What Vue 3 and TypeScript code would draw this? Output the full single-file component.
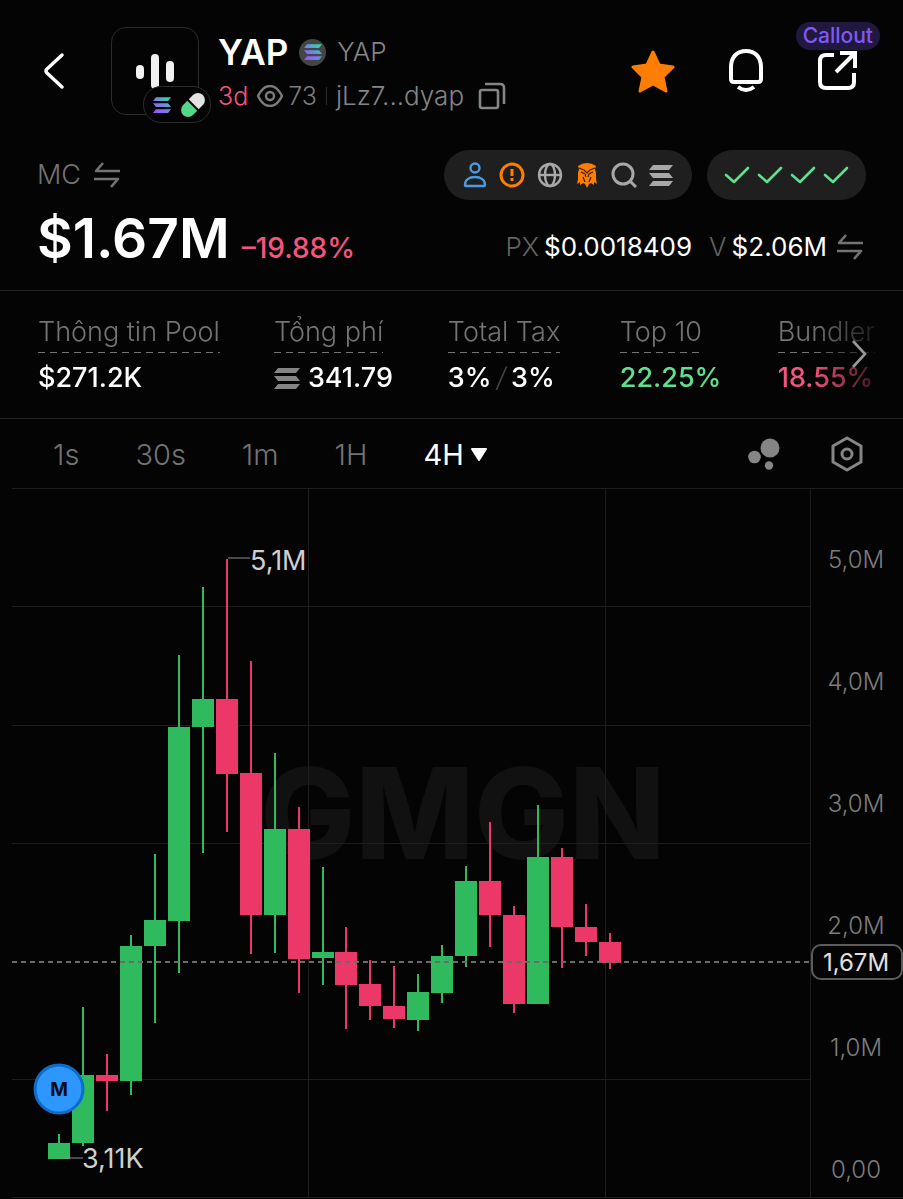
<script setup lang="ts">
interface Candle {
  up: boolean
  high: number
  top: number
  bottom: number
  low: number
}

const STEP = 24
const FIRST = 59
const LAST = 610

const raw: [boolean, number, number, number, number][] = [
  [true, 1134, 1143, 1159, 1159],
  [true, 1007, 1075, 1143, 1146],
  [false, 1054, 1075, 1081, 1111],
  [true, 935, 946, 1081, 1095],
  [true, 854, 920, 946, 1023],
  [true, 655, 727, 921, 973],
  [true, 587, 699, 727, 853],
  [false, 559, 699, 774, 832],
  [false, 661, 773, 915, 954],
  [true, 753, 829, 915, 953],
  [false, 807, 829, 959, 993],
  [true, 867, 952, 958, 985],
  [false, 927, 952, 985, 1029],
  [false, 960, 984, 1006, 1020],
  [false, 966, 1006, 1019, 1028],
  [true, 974, 992, 1020, 1031],
  [true, 945, 956, 993, 1003],
  [true, 866, 881, 956, 967],
  [false, 822, 881, 915, 947],
  [false, 906, 915, 1004, 1013],
  [true, 805, 857, 1004, 1004],
  [false, 848, 857, 927, 968],
  [false, 904, 927, 942, 956],
  [false, 933, 942, 963, 969],
]

const candles: Candle[] = raw.map(([up, high, top, bottom, low]) => ({ up, high, top, bottom, low }))
const centerOf = (i: number): number =>
  i === 0 ? FIRST : Math.round(FIRST + ((LAST - FIRST) * i) / (raw.length - 1))
const bodyWidth = STEP - 2

const gridY = [606, 725, 843, 1079, 1197]
const gridX = [308, 605]
const axis = [
  { label: '5,0M', y: 568 },
  { label: '4,0M', y: 690 },
  { label: '3,0M', y: 812 },
  { label: '2,0M', y: 934 },
  { label: '1,0M', y: 1056 },
  { label: '0,00', y: 1178 },
]

const frames = ['1s', '30s', '1m', '1H']
const checkCount = 4
</script>

<template>
  <main class="page">
    <svg class="defs" aria-hidden="true">
      <defs>
        <linearGradient id="sol" x1="0" y1="1" x2="1" y2="0">
          <stop offset="0" stop-color="#a04dff" />
          <stop offset="0.5" stop-color="#6f86e6" />
          <stop offset="1" stop-color="#19f0a0" />
        </linearGradient>
        <symbol id="bars" viewBox="0 0 24 21">
          <path d="M4 0h20l-4 5H0zM0 8h20l4 5H4zM4 16h20l-4 5H0z" />
        </symbol>
        <symbol id="swap" viewBox="0 0 28 28">
          <path d="M27 10H3l7-8M1 18h24l-7 8" fill="none" stroke="currentColor" stroke-width="2.6" stroke-linejoin="round" />
        </symbol>
      </defs>
    </svg>

    <header class="top">
      <button class="icon back" aria-label="Back">
        <svg width="22" height="38" viewBox="0 0 22 38"><path d="M19 3 4 17q-2 2 0 4l15 14" fill="none" stroke="#fff" stroke-width="3.4" stroke-linecap="round" /></svg>
      </button>
      <div class="avatar">
        <svg width="40" height="36" viewBox="0 0 40 36" fill="#f2f2f2">
          <rect x="1" y="12" width="8" height="14" rx="4" />
          <rect x="16" y="1" width="8" height="35" rx="4" />
          <rect x="31" y="8" width="8" height="21" rx="4" />
        </svg>
        <div class="chain">
          <svg width="18" height="16" viewBox="0 0 24 21"><path d="M4 0h20l-4 5H0zM0 8h20l4 5H4zM4 16h20l-4 5H0z" fill="url(#sol)" /></svg>
          <svg width="28" height="28" viewBox="0 0 28 28">
            <g transform="rotate(45 14 14)">
              <path d="M7 13V7a7 7 0 0 1 14 0v6z" fill="#e2e2e2" />
              <path d="M7 15v6a7 7 0 0 0 14 0v-6z" fill="#55d68a" />
            </g>
          </svg>
        </div>
      </div>
      <div class="ident">
        <div class="name">
          <h1>YAP</h1>
          <span class="coin"><svg width="18" height="16" viewBox="0 0 24 21"><path d="M4 0h20l-4 5H0zM0 8h20l4 5H4zM4 16h20l-4 5H0z" fill="url(#sol)" /></svg></span>
          <span class="full">YAP</span>
        </div>
        <div class="meta">
          <span class="age">3d</span>
          <svg class="eye" width="26" height="22" viewBox="0 0 26 22" fill="none" stroke="#7c7c7c" stroke-width="2.4">
            <path d="M1 11C4 5 8 1 13 1s9 4 12 10c-3 6-7 10-12 10S4 17 1 11z" /><circle cx="13" cy="11" r="4" />
          </svg>
          <span class="views">73</span>
          <i class="sep"></i>
          <span class="addr">jLz7...dyap</span>
          <button class="icon" aria-label="Copy address">
            <svg width="28" height="28" viewBox="0 0 28 28" fill="none" stroke="#858585" stroke-width="2.6">
              <rect x="2" y="8" width="18" height="18" rx="2" /><path d="M7 2h15q4 0 4 4v16" />
            </svg>
          </button>
        </div>
      </div>
      <nav class="actions">
        <button class="icon" aria-label="Favourite">
          <svg width="44" height="44" viewBox="0 0 44 44"><path d="m22 3 6 13 14 2-10 10 3 14-13-7-13 7 3-14L2 18l14-2z" fill="#ff7d00" stroke="#ff7d00" stroke-width="3" stroke-linejoin="round" /></svg>
        </button>
        <button class="icon" aria-label="Alerts">
          <svg width="36" height="44" viewBox="0 0 36 44" fill="none" stroke="#fff" stroke-width="4">
            <path d="M3 18C3 8 9 2 18 2s15 6 15 16v12q0 3-3 3H6q-3 0-3-3z" /><path d="M10 38q8 6 16 0" />
          </svg>
        </button>
        <button class="icon share" aria-label="Share callout">
          <svg width="40" height="40" viewBox="0 0 40 40" fill="none" stroke="#fff" stroke-width="4">
            <path d="M17 4H9Q3 4 3 10v21q0 6 6 6h22q6 0 6-6V22" /><path d="M23 2h15v15M37 3 19 21" />
          </svg>
          <span class="callout">Callout</span>
        </button>
      </nav>
    </header>

    <section class="summary">
      <div class="row">
        <button class="icon mc">MC <svg width="28" height="28"><use href="#swap" /></svg></button>
        <div class="pills">
          <div class="pill links">
            <svg width="24" height="26" viewBox="0 0 24 26" fill="none" stroke="#4a9be0" stroke-width="2.4"><circle cx="12" cy="6" r="4.5" /><path d="M2 23c0-5 4-8 10-8s10 3 10 8q0 1-1 1H3q-1 0-1-1z" /></svg>
            <svg width="26" height="26" viewBox="0 0 26 26" fill="none" stroke="#ff7d00" stroke-width="3"><circle cx="13" cy="13" r="11" /><path d="M13 7v7M13 16v3" /></svg>
            <svg width="26" height="26" viewBox="0 0 26 26" fill="none" stroke="#a8a8a8" stroke-width="2.4"><circle cx="13" cy="13" r="11" /><ellipse cx="13" cy="13" rx="5" ry="11" /><path d="M2 13h22" /></svg>
            <svg width="24" height="26" viewBox="0 0 24 26">
              <path d="M3 4Q7 1 12 1t9 3l-1 3 1 4v6l1 5-3-2v3l-3-2-2 1-2 4-2-4-2-1-3 2v-3l-3 2 1-5v-6l1-4z" fill="#ff7d00" />
              <path d="m4 6 5 2 3 3 3-3 5-2M6 10l4 2 1 3M18 10l-4 2-1 3M8 15l2 5M16 15l-2 5" fill="none" stroke="#3a220d" stroke-width="1.2" />
            </svg>
            <svg width="26" height="26" viewBox="0 0 26 26" fill="none" stroke="#a8a8a8" stroke-width="3"><circle cx="12" cy="12" r="10" /><path d="m19 19 6 6" /></svg>
            <svg width="24" height="21" fill="#a8a8a8"><use href="#bars" /></svg>
          </div>
          <div class="pill">
            <svg v-for="n in checkCount" :key="n" width="26" height="20" viewBox="0 0 26 20"><path d="m2 10 8 7L24 3" fill="none" stroke="#5fe08f" stroke-width="2.6" stroke-linecap="round" stroke-linejoin="round" /></svg>
          </div>
        </div>
      </div>
      <div class="row prices">
        <div class="cap"><strong>$1.67M</strong><span class="change">–19.88%</span></div>
        <div class="quote">
          <span class="key">PX</span><span>$0.0018409</span>
          <span class="key vol">V</span><span>$2.06M</span>
          <button class="icon" aria-label="Switch volume"><svg width="28" height="28"><use href="#swap" /></svg></button>
        </div>
      </div>
    </section>

    <section class="stats">
      <dl>
        <div><dt>Thông tin Pool</dt><dd>$271.2K</dd></div>
        <div><dt>Tổng phí</dt><dd class="fee"><svg width="26" height="21" viewBox="0 0 26 21" fill="#858585"><path d="M4 0h22l-4 5H0zM0 8h22l4 5H4zM4 16h22l-4 5H0z" /></svg>341.79</dd></div>
        <div><dt>Total Tax</dt><dd>3%<i>/</i>3%</dd></div>
        <div><dt>Top 10</dt><dd class="good">22.25%</dd></div>
        <div><dt>Bundler</dt><dd class="bad">18.55%</dd></div>
      </dl>
      <button class="icon more" aria-label="More statistics">
        <svg width="16" height="30" viewBox="0 0 16 30"><path d="m2 2 12 13L2 28" fill="none" stroke="#999" stroke-width="2.6" /></svg>
      </button>
    </section>

    <nav class="frames">
      <button v-for="f in frames" :key="f" class="icon frame">{{ f }}</button>
      <button class="icon frame on">4H<svg width="18" height="14" viewBox="0 0 18 14"><path d="M2 1h14l-7 11z" fill="#fff" stroke="#fff" stroke-width="2" stroke-linejoin="round" /></svg></button>
      <div class="tools">
        <button class="icon" aria-label="Bubble map">
          <svg width="32" height="32" viewBox="0 0 32 32" fill="#858585"><circle cx="22" cy="10" r="9.5" /><circle cx="6.5" cy="19" r="6.3" /><circle cx="21" cy="27.5" r="4.2" /></svg>
        </button>
        <button class="icon" aria-label="Chart settings">
          <svg width="32" height="36" viewBox="0 0 32 36" fill="none" stroke="#858585" stroke-width="3" stroke-linejoin="round"><path d="m16 2 14 8v16l-14 8-14-8V10z" /><circle cx="16" cy="18" r="5" /></svg>
        </button>
      </div>
    </nav>

    <svg class="chart" viewBox="0 488 903 711" role="img" aria-label="Market cap, 4 hour candles">
      <text class="mark" x="463" y="859">GMGN</text>
      <g class="grid">
        <rect x="12" y="488" width="891" height="1" />
        <rect v-for="y in gridY" :key="y" x="12" :y="y" :width="y === 1197 ? 891 : 798" height="1" />
        <rect v-for="x in gridX" :key="x" :x="x" y="489" width="1" height="708" />
        <rect x="810" y="489" width="1" height="708" />
      </g>
      <g v-for="(c, i) in candles" :key="i" :class="c.up ? 'up' : 'down'">
        <rect :x="centerOf(i) - 1" :y="c.high" width="2" :height="c.low - c.high" />
        <rect :x="centerOf(i) - 11" :y="c.top" :width="bodyWidth" :height="c.bottom - c.top" />
      </g>
      <path class="now" d="M12 962H810" />
      <path class="lead" d="M228 558H250M60 1158H83" />
      <text class="tip" x="250" y="570">5,1M</text>
      <text class="tip" x="82" y="1168">3,11K</text>
      <text v-for="a in axis" :key="a.label" class="tick" x="856" :y="a.y">{{ a.label }}</text>
      <rect class="tag" x="812" y="945" width="90" height="34" rx="9" />
      <text class="tick live" x="856" y="971">1,67M</text>
      <circle cx="59" cy="1089" r="24" fill="#2e96ff" stroke="#0d6cc9" stroke-width="3" />
      <text class="pin" x="59" y="1096">M</text>
    </svg>
  </main>
</template>

<style>
html, body { background: #040404; }
</style>

<style scoped>
.page { background: #040404; color: #fff; font-family: Inter, "Liberation Sans", sans-serif; font-weight: 300; font-size: 26px; line-height: 36px; }
.page svg { display: block; flex: none; }
.page .defs { position: absolute; width: 0; height: 0; }
.icon { display: flex; align-items: center; padding: 0; border: 0; background: none; color: inherit; font: inherit; cursor: pointer; }
.top { display: flex; align-items: center; padding: 27px 46px 0 43px; }
.avatar { position: relative; display: flex; align-items: center; justify-content: center; width: 86px; height: 86px; margin: 0 19px 0 46px; border: 1px solid #2c2c2c; border-radius: 15px; }
.chain { position: absolute; left: 31px; top: 58px; display: flex; align-items: center; gap: 8px; height: 35px; padding: 0 3px 0 9px; border: 1px solid #2c2c2c; border-radius: 18px; background: #040404; }
.name { display: flex; align-items: center; gap: 11px; height: 50px; }
.meta { display: flex; align-items: center; height: 38px; }
h1 { margin: 0; font-size: 35px; font-weight: 600; }
.coin { display: flex; align-items: center; justify-content: center; width: 27px; height: 27px; border-radius: 50%; background: #454545; }
.full, .addr { color: #858585; }
.age, .views { font-size: 25px; }
.age { color: #f5547f; }
.eye { margin: 0 5px 0 9px; }
.views { color: #7c7c7c; }
.sep { width: 1px; height: 18px; margin: 0 9px; background: #2c2c2c; }
.addr { margin-right: 14px; }
.actions { display: flex; align-items: center; gap: 53px; margin-left: auto; }
.share { position: relative; }
.callout { position: absolute; right: -23px; top: -29px; padding: 0 7px; border-radius: 14px; background: #21183f; color: #8158f5; font-size: 21px; line-height: 28px; font-weight: 500; }
.summary { padding: 35px 37px 21px; border-bottom: 1px solid #232323; }
.row { display: flex; align-items: center; justify-content: space-between; }
.mc { gap: 12px; color: #737373; font-size: 27px; }
.pills { display: flex; gap: 15px; }
.pill { display: flex; align-items: center; gap: 7px; height: 50px; padding: 0 17px; border-radius: 25px; background: #1f1f1f; }
.links { gap: 12px; padding: 0 19px; }
.prices { height: 52px; padding-top: 17px; }
.cap { display: flex; align-items: baseline; line-height: 60px; }
.cap strong { font-size: 55px; font-weight: 600; }
.change { margin-left: 12px; color: #f5547f; font-size: 28px; font-weight: 500; }
.quote { display: flex; align-items: center; gap: 5px; padding: 8px 2px 0 0; font-weight: 400; }
.quote .icon { margin-left: 4px; color: #737373; }
.key { color: #636363; font-weight: 300; }
.vol { margin-left: 12px; }
.stats { position: relative; border-bottom: 1px solid #232323; font-size: 27px; }
dl { display: grid; grid-template-columns: 236fr 174fr 172fr 158fr 97fr; margin: 0; padding: 23px 28px 22px 38px; -webkit-mask-image: linear-gradient(90deg, #000 90%, transparent 99%); mask-image: linear-gradient(90deg, #000 90%, transparent 99%); }
dt { display: inline-block; padding-bottom: 3px; color: #737373; white-space: nowrap; background: repeating-linear-gradient(90deg, #737373 0 7px, transparent 7px 12px) bottom / 100% 1px no-repeat; }
dd { display: flex; align-items: center; gap: 5px; margin: 7px 0 0; font-weight: 500; }
dd.fee { gap: 8px; }
dd i { color: #454545; font-weight: 300; }
.good { color: #5fe08f; }
.bad { color: #f5547f; }
.more { position: absolute; right: 36px; top: 48px; }
.frames { display: flex; align-items: center; height: 69px; padding: 0 40px 0 53px; gap: 56px; color: #737373; font-size: 29px; }
.frame { padding-top: 3px; }
.on { gap: 6px; color: #fff; font-weight: 400; }
.tools { display: flex; align-items: center; gap: 51px; margin-left: auto; }
.chart { width: 100%; height: auto; }
.grid { fill: #1d1d1d; }
.up { fill: #2fbb5d; }
.down { fill: #ec3869; }
.now { stroke: #6b6b6b; stroke-width: 2; stroke-dasharray: 5 4; }
.lead { stroke: #8f8f8f; stroke-width: 1; }
.mark { fill: #111; font-size: 126px; font-weight: 800; text-anchor: middle; }
.tip { fill: #cfcfcf; font-size: 27px; font-weight: 400; }
.tick { fill: #7c7c7c; font-size: 24px; text-anchor: middle; }
.tag { fill: #040404; stroke: #5c5c5c; stroke-width: 2; }
.live { fill: #e0e0e0; font-size: 24px; font-weight: 400; }
.pin { fill: #0a0f18; font-size: 19px; font-weight: 700; text-anchor: middle; }
</style>
